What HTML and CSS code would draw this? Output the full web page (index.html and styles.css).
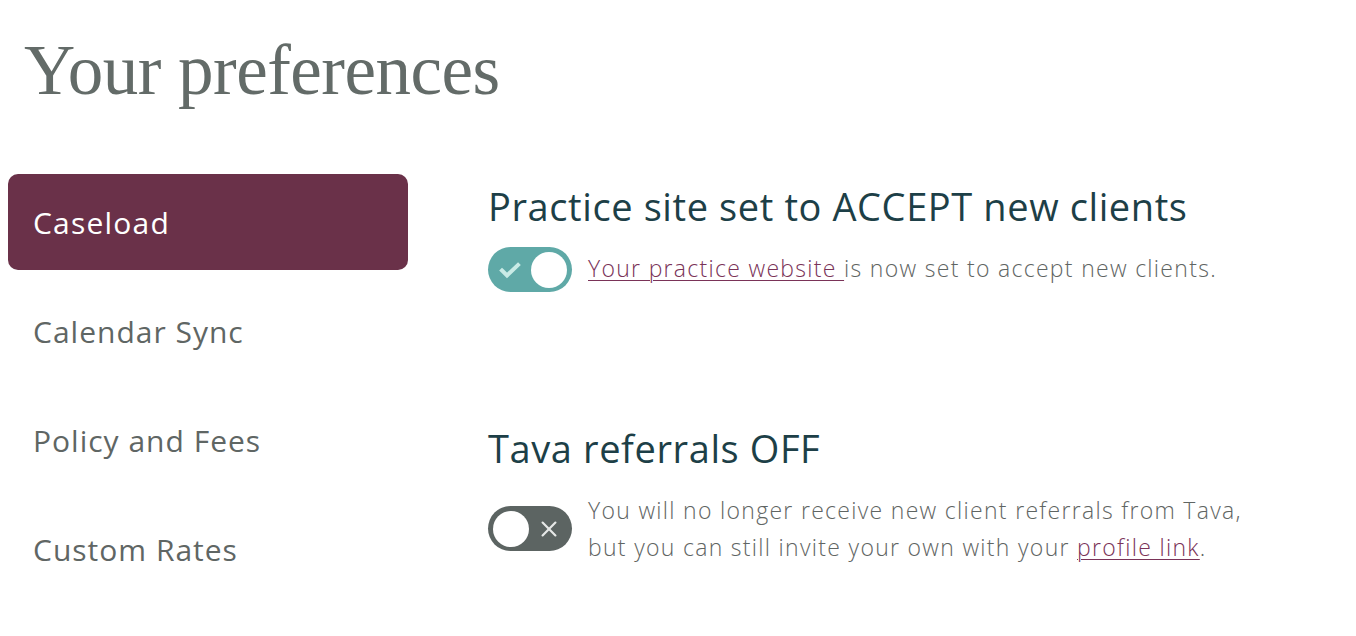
FILE: index.html
```html
<!DOCTYPE html>
<html lang="en">
<head>
<meta charset="utf-8">
<title>Your preferences</title>
<link rel="stylesheet" href="styles.css">
</head>
<body>
  <h1 class="page-title">Your preferences</h1>
  <div class="layout">
    <nav class="sidenav">
      <a class="nav-item active" href="#">Caseload</a>
      <a class="nav-item" href="#">Calendar Sync</a>
      <a class="nav-item" href="#">Policy and Fees</a>
      <a class="nav-item" href="#">Custom Rates</a>
    </nav>
    <main class="content">
      <section class="pref">
        <h2 class="pref-title">Practice site set to ACCEPT new clients</h2>
        <div class="pref-row">
          <span class="toggle on">
            <svg class="toggle-icon check" viewBox="0 0 24 24" width="24" height="24"><path d="M4 12.5l5 5L20 7" fill="none" stroke="#c9ebe6" stroke-width="4" stroke-linecap="square"/></svg>
            <span class="knob"></span>
          </span>
          <p class="pref-text"><a href="#" class="link">Your practice website </a>is now set to accept new clients.</p>
        </div>
      </section>
      <section class="pref">
        <h2 class="pref-title">Tava referrals OFF</h2>
        <div class="pref-row">
          <span class="toggle off">
            <span class="knob"></span>
            <svg class="toggle-icon cross" viewBox="0 0 24 24" width="22" height="22"><path d="M5 5L19 19M19 5L5 19" fill="none" stroke="#e6e8e7" stroke-width="2.4" stroke-linecap="round"/></svg>
          </span>
          <p class="pref-text">You will no longer receive new client referrals from Tava, but you can still invite your own with your <a href="#" class="link">profile link</a>.</p>
        </div>
      </section>
    </main>
  </div>
</body>
</html>
```
FILE: styles.css
```css
* { box-sizing: border-box; }
body {
  margin: 0;
  background: #ffffff;
  font-family: "Open Sans", "Lato", sans-serif;
}
.page-title {
  margin: 0;
  padding: 30px 0 0 24px;
  font-family: "Liberation Serif", serif;
  font-weight: 400;
  font-size: 71px;
  line-height: 80px;
  color: #636b68;
  letter-spacing: -0.5px;
}
.layout {
  display: flex;
  gap: 80px;
  padding: 64px 0 0 8px;
}
.sidenav {
  width: 400px;
  flex: none;
  display: flex;
  flex-direction: column;
  gap: 13px;
}
.nav-item {
  display: flex;
  align-items: center;
  height: 96px;
  padding: 0 25px;
  border-radius: 10px;
  font-size: 30px;
  color: #5f6664;
  text-decoration: none;
  letter-spacing: 1px;
}
.nav-item.active {
  background: #6a3149;
  color: #ffffff;
  letter-spacing: 1.2px;
}
.content {
  flex: 1;
  padding-top: 10px;
}
.pref + .pref {
  margin-top: 134px;
}
.pref-title {
  margin: 0;
  font-size: 38px;
  font-weight: 500;
  line-height: 44px;
  color: #1d3f47;
  letter-spacing: 0.6px;
}
.pref-row {
  display: flex;
  align-items: flex-start;
  gap: 16px;
  margin-top: 19px;
}
.toggle {
  flex: none;
  width: 84px;
  height: 45px;
  border-radius: 23px;
  display: flex;
  align-items: center;
  justify-content: space-between;
  padding: 0 5px 0 10px;
}
.toggle.on { background: #5fa9a7; }
.toggle.off {
  background: #5c6462;
  padding: 0 12px 0 5px;
  margin-top: 17px;
}
.knob {
  width: 36px;
  height: 36px;
  border-radius: 50%;
  background: #ffffff;
}
.pref-text {
  margin: 0;
  font-size: 23px;
  font-weight: 300;
  line-height: 37px;
  color: #5f6563;
  max-width: 680px;
  padding-top: 3px;
  letter-spacing: 1.3px;
}
.link {
  color: #7a3358;
  text-decoration: underline;
  text-underline-offset: 3px;
  text-decoration-thickness: 1px;
}
```
